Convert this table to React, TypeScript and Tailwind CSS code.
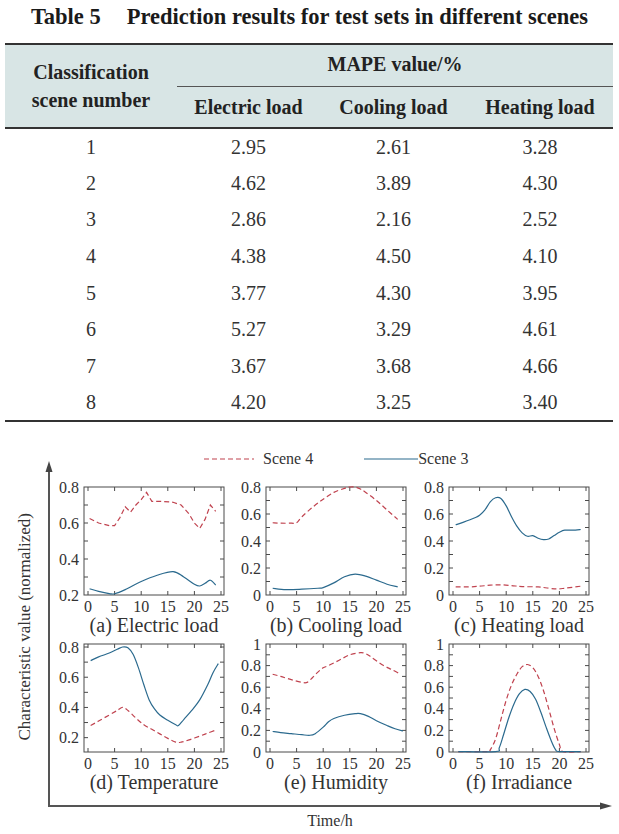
type Pt = [number, number];

const RED = "#c0434f";
const BLUE = "#2b6a8e";
const INK = "#4a4a4a";

const rows = [
  ["1", "2.95", "2.61", "3.28"],
  ["2", "4.62", "3.89", "4.30"],
  ["3", "2.86", "2.16", "2.52"],
  ["4", "4.38", "4.50", "4.10"],
  ["5", "3.77", "4.30", "3.95"],
  ["6", "5.27", "3.29", "4.61"],
  ["7", "3.67", "3.68", "4.66"],
  ["8", "4.20", "3.25", "3.40"],
];

type ChartSpec = {
  caption: string;
  lo: number;
  hi: number;
  labels: number[];
  red: Pt[];
  blue: Pt[];
  redStraight?: boolean;
};

const charts: ChartSpec[] = [
  {
    caption: "(a) Electric load",
    lo: 0.2,
    hi: 0.8,
    labels: [0.2, 0.4, 0.6, 0.8],
    redStraight: true,
    red: [[0.3, 0.625], [2, 0.6], [4, 0.585], [5, 0.585], [6, 0.63], [7, 0.69], [8, 0.66], [9, 0.7], [10, 0.73], [11, 0.77], [12, 0.72], [13, 0.72], [14, 0.72], [16, 0.715], [17.5, 0.7], [19, 0.65], [20, 0.6], [21, 0.57], [22, 0.62], [23, 0.7], [24, 0.665]],
    blue: [[0.3, 0.235], [2, 0.22], [4, 0.208], [5, 0.207], [7, 0.23], [10, 0.275], [13, 0.31], [16, 0.33], [18, 0.3], [20, 0.26], [21, 0.25], [22, 0.265], [23, 0.282], [24, 0.255]],
  },
  {
    caption: "(b) Cooling load",
    lo: 0,
    hi: 0.8,
    labels: [0, 0.2, 0.4, 0.6, 0.8],
    red: [[0.5, 0.535], [2, 0.532], [4, 0.532], [5, 0.535], [6, 0.58], [8, 0.65], [10, 0.71], [12, 0.76], [14, 0.79], [15, 0.8], [16, 0.8], [17, 0.785], [18, 0.76], [20, 0.7], [22, 0.63], [24, 0.56]],
    blue: [[0.5, 0.05], [3, 0.04], [6, 0.043], [9, 0.05], [10, 0.055], [12, 0.09], [14, 0.135], [16, 0.155], [18, 0.14], [20, 0.11], [22, 0.08], [24, 0.06]],
  },
  {
    caption: "(c) Heating load",
    lo: 0,
    hi: 0.8,
    labels: [0, 0.2, 0.4, 0.6, 0.8],
    red: [[0.5, 0.06], [3, 0.06], [5, 0.065], [7, 0.073], [9, 0.075], [11, 0.07], [13, 0.062], [16, 0.06], [18, 0.05], [19.5, 0.045], [21, 0.05], [24, 0.065]],
    blue: [[0.5, 0.52], [2, 0.54], [4, 0.57], [5, 0.59], [6, 0.63], [7, 0.69], [8, 0.72], [9, 0.715], [10, 0.66], [11, 0.58], [12, 0.51], [13, 0.46], [14, 0.435], [15, 0.44], [16, 0.42], [17, 0.41], [18, 0.415], [19, 0.44], [20, 0.465], [21, 0.48], [23, 0.48], [24, 0.485]],
  },
  {
    caption: "(d) Temperature",
    lo: 0.105,
    hi: 0.82,
    labels: [0.2, 0.4, 0.6, 0.8],
    red: [[0.5, 0.28], [2, 0.31], [4, 0.35], [5.5, 0.38], [6.5, 0.4], [7.5, 0.38], [9, 0.33], [10.5, 0.285], [12, 0.255], [13.5, 0.225], [15, 0.195], [16.5, 0.17], [17.5, 0.17], [19, 0.185], [21, 0.21], [22.5, 0.23], [24, 0.25]],
    blue: [[0.5, 0.71], [2, 0.735], [4, 0.76], [5.5, 0.785], [6.5, 0.8], [7.5, 0.795], [8.5, 0.75], [9.5, 0.66], [10.5, 0.55], [11.5, 0.45], [12.5, 0.39], [13.5, 0.35], [15, 0.315], [16.5, 0.285], [17, 0.28], [18, 0.32], [19.5, 0.38], [21, 0.45], [22.5, 0.55], [23.5, 0.63], [24.5, 0.69]],
  },
  {
    caption: "(e) Humidity",
    lo: 0,
    hi: 1,
    labels: [0, 0.2, 0.4, 0.6, 0.8, 1],
    red: [[0.5, 0.72], [2, 0.7], [4, 0.67], [6, 0.645], [7, 0.645], [8, 0.69], [9, 0.74], [10, 0.78], [11, 0.8], [13, 0.85], [15, 0.9], [17, 0.92], [18, 0.91], [19, 0.88], [21, 0.81], [23, 0.76], [24.5, 0.72]],
    blue: [[0.5, 0.19], [2, 0.18], [4, 0.17], [6, 0.16], [7.5, 0.155], [8.5, 0.17], [10, 0.23], [11, 0.28], [12, 0.31], [14, 0.34], [16, 0.355], [17, 0.355], [18.5, 0.33], [20, 0.29], [22, 0.245], [23.5, 0.215], [25, 0.195]],
  },
  {
    caption: "(f) Irradiance",
    lo: 0,
    hi: 1,
    labels: [0, 0.2, 0.4, 0.6, 0.8, 1],
    red: [[1, 0.004], [6.5, 0.004], [7, 0.02], [8, 0.12], [9, 0.3], [10, 0.48], [11, 0.62], [12, 0.72], [13, 0.79], [14, 0.81], [15, 0.78], [16, 0.7], [17, 0.57], [18, 0.4], [19, 0.22], [20, 0.07], [20.7, 0.004], [24, 0.004]],
    blue: [[1, 0.004], [8, 0.004], [8.7, 0.04], [9.5, 0.16], [10.5, 0.32], [11.5, 0.45], [12.5, 0.54], [13.5, 0.58], [14.5, 0.56], [15.5, 0.49], [16.5, 0.37], [17.5, 0.23], [18.5, 0.1], [19.3, 0.02], [20, 0.004], [24, 0.004]],
  },
];

// catmull-rom through the points
function smooth(p: Pt[]) {
  let d = `M${p[0][0]},${p[0][1]}`;
  for (let i = 0; i < p.length - 1; i++) {
    const p0 = p[i - 1] || p[i];
    const p1 = p[i];
    const p2 = p[i + 1];
    const p3 = p[i + 2] || p2;
    const c1x = p1[0] + (p2[0] - p0[0]) / 6;
    const c1y = p1[1] + (p2[1] - p0[1]) / 6;
    const c2x = p2[0] - (p3[0] - p1[0]) / 6;
    const c2y = p2[1] - (p3[1] - p1[1]) / 6;
    d += ` C${c1x},${c1y} ${c2x},${c2y} ${p2[0]},${p2[1]}`;
  }
  return d;
}

function straight(p: Pt[]) {
  return p.map((q, i) => `${i ? "L" : "M"}${q[0]},${q[1]}`).join(" ");
}

function fmt(v: number) {
  if (v === 0) return "0";
  if (v === 1) return "1";
  return v.toFixed(1);
}

function Chart({ spec, id }: { spec: ChartSpec; id: number }) {
  const L = 34;
  const T = 9;
  const W = 140;
  const H = 108;
  const sx = (t: number) => L + 4 + (t * (W - 7)) / 25;
  const sy = (v: number) => T + H - ((v - spec.lo) / (spec.hi - spec.lo)) * H;

  const minor: number[] = [];
  for (let k = Math.ceil(spec.lo * 10 - 1e-6); k <= Math.floor(spec.hi * 10 + 1e-6); k++) {
    const y = sy(k / 10);
    if (y > T + 1 && y < T + H - 1) minor.push(y);
  }
  const hours = [0, 5, 10, 15, 20, 25];
  const red = spec.red.map(([t, v]) => [sx(t), sy(v)] as Pt);
  const blue = spec.blue.map(([t, v]) => [sx(t), sy(v)] as Pt);

  return (
    <svg width="182" height="137" className="block">
      <defs>
        <clipPath id={`clip${id}`}>
          <rect x={L} y={T - 1} width={W} height={H + 2} />
        </clipPath>
      </defs>
      {minor.map((y) => (
        <g key={y} stroke={INK} strokeWidth="1">
          <line x1={L} y1={y} x2={L + 4} y2={y} />
          <line x1={L + W - 4} y1={y} x2={L + W} y2={y} />
        </g>
      ))}
      {hours.map((h) => {
        const x = sx(h);
        return (
          <g key={h}>
            {x < L + W - 2 && (
              <g stroke={INK} strokeWidth="1">
                <line x1={x} y1={T} x2={x} y2={T + 4} />
                <line x1={x} y1={T + H - 4} x2={x} y2={T + H} />
              </g>
            )}
            <text x={x} y={T + H + 17} textAnchor="middle" fontSize="16" fill="#333">
              {h}
            </text>
          </g>
        );
      })}
      {spec.labels.map((v) => (
        <text key={v} x={L - 5} y={sy(v)} dy="0.35em" textAnchor="end" fontSize="16" fill="#333">
          {fmt(v)}
        </text>
      ))}
      <rect x={L} y={T} width={W} height={H} fill="none" stroke={INK} strokeWidth="1" />
      <g clipPath={`url(#clip${id})`} fill="none" strokeWidth="1.2">
        <path d={spec.redStraight ? straight(red) : smooth(red)} stroke={RED} strokeDasharray="5 3" />
        <path d={smooth(blue)} stroke={BLUE} />
      </g>
    </svg>
  );
}

export default function App() {
  return (
    <div className="h-[834px] w-[619px] overflow-hidden bg-white font-['Liberation_Serif',serif] text-[#2a2a2a]">
      {/* Table caption */}
      <h1 className="pt-[4px] text-center text-[22.5px] font-bold leading-[26px] text-[#1a1a1a]">
        Table 5<span className="inline-block w-[26px]" />
        Prediction results for test sets in different scenes
      </h1>

      {/* Table */}
      <table className="mx-[5px] mt-[13px] w-[608px] table-fixed border-collapse text-[20px]">
        <colgroup>
          <col className="w-[172px]" />
          <col className="w-[143px]" />
          <col className="w-[147px]" />
          <col className="w-[146px]" />
        </colgroup>
        <thead className="bg-[#d8e5e5] font-bold text-[#222]">
          <tr className="h-[42px] border-t-2 border-[#333]">
            <th rowSpan={2} className="font-bold leading-[28px]">
              Classification
              <br />
              scene number
            </th>
            <th colSpan={3} className="border-b border-[#555] pb-[2px] font-bold">
              MAPE value/%
            </th>
          </tr>
          <tr className="h-[42px] border-b-2 border-[#333]">
            <th className="font-bold">Electric load</th>
            <th className="font-bold">Cooling load</th>
            <th className="font-bold">Heating load</th>
          </tr>
        </thead>
        <tbody className="text-[#333]">
          {rows.map((r, i) => (
            <tr key={r[0]} className={i === rows.length - 1 ? "h-[36.6px] border-b-2 border-[#333]" : "h-[36.6px]"}>
              {r.map((c, j) => (
                <td key={j} className="text-center">
                  {c}
                </td>
              ))}
            </tr>
          ))}
        </tbody>
      </table>

      {/* Figure */}
      <div className="mt-[26px] text-[#333]">
        <div className="flex h-[22px] items-center pl-[204px] text-[16px] leading-none">
          <svg width="50" height="4">
            <line x1="0" y1="2" x2="50" y2="2" stroke={RED} strokeWidth="1.2" strokeDasharray="5 3" />
          </svg>
          <span className="ml-[9px]">Scene 4</span>
          <svg width="54" height="4" className="ml-[51px]">
            <line x1="0" y1="2" x2="54" y2="2" stroke={BLUE} strokeWidth="1.2" />
          </svg>
          <span>Scene 3</span>
        </div>

        <div className="flex">
          <div className="flex w-[48px] items-center justify-center pb-[23px]">
            <div className="rotate-180 text-[17px] leading-none [writing-mode:vertical-rl]">
              Characteristic value (normalized)
            </div>
          </div>
          <div className="relative h-[337px] w-[556px] border-b-2 border-l-2 border-[#555] pt-[8px]">
            <svg width="10" height="11" className="absolute -left-[6px] -top-[9px]">
              <path d="M5 0 L8.5 11 L1.5 11 Z" fill="#444" />
            </svg>
            <svg width="12" height="10" className="absolute -bottom-[6px] -right-[8px]">
              <path d="M12 5 L0 1.5 L0 8.5 Z" fill="#444" />
            </svg>
            <div className="grid grid-cols-[182px_183px_182px]">
              {charts.map((c, i) => (
                <div key={c.caption}>
                  <Chart spec={c} id={i} />
                  <div className="ml-[34px] w-[140px] whitespace-nowrap text-center text-[20px] leading-[20px]">
                    {c.caption}
                  </div>
                </div>
              ))}
            </div>
          </div>
        </div>

        <div className="ml-[48px] mt-[4px] w-[564px] text-center text-[16px] leading-[20px]">Time/h</div>
      </div>
    </div>
  );
}
